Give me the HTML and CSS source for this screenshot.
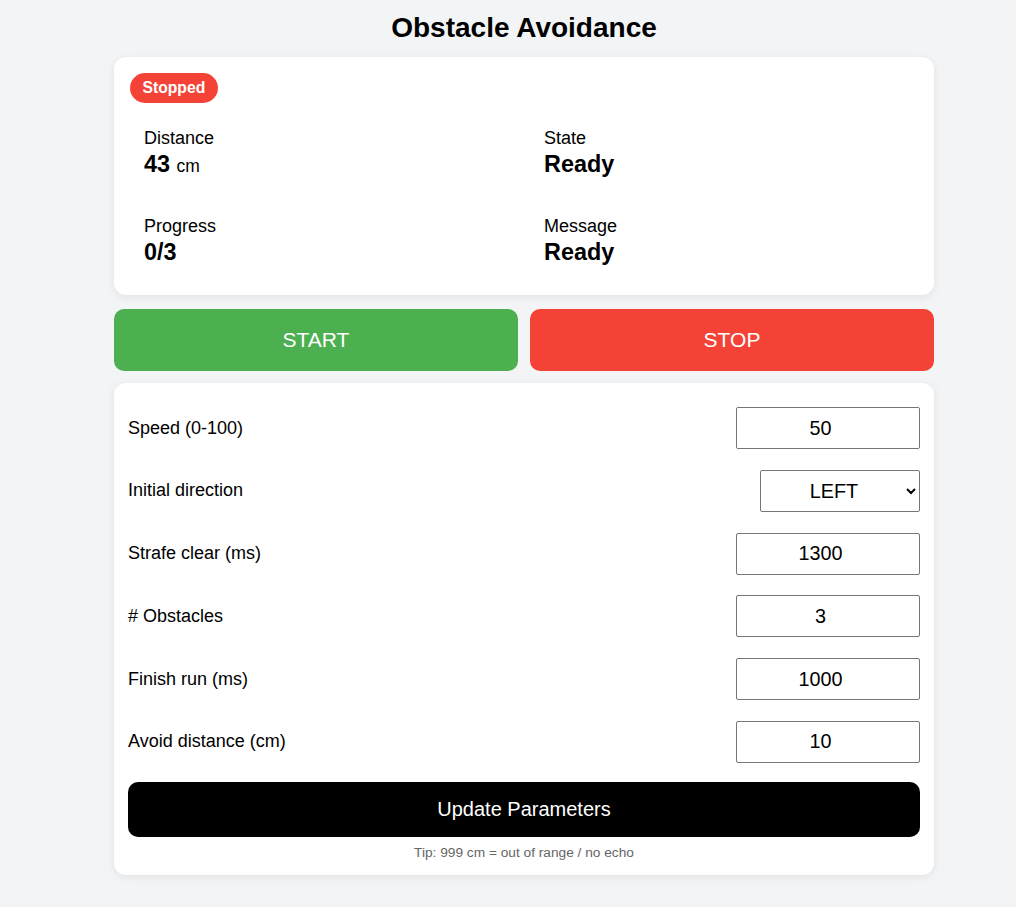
FILE: index.html
```html
<!DOCTYPE html>
<html lang="en">
<head>
<meta charset="utf-8">
<title>Obstacle Avoidance</title>
<link rel="stylesheet" href="styles.css">
</head>
<body>
<div class="page">
  <h1 class="title">Obstacle Avoidance</h1>

  <section class="card status">
    <span class="badge">Stopped</span>
    <div class="stats">
      <div class="stat">
        <div class="stat-label">Distance</div>
        <div class="stat-value">43 <span class="unit">cm</span></div>
      </div>
      <div class="stat">
        <div class="stat-label">State</div>
        <div class="stat-value">Ready</div>
      </div>
      <div class="stat">
        <div class="stat-label">Progress</div>
        <div class="stat-value">0/3</div>
      </div>
      <div class="stat">
        <div class="stat-label">Message</div>
        <div class="stat-value">Ready</div>
      </div>
    </div>
  </section>

  <div class="controls">
    <button class="btn btn-start">START</button>
    <button class="btn btn-stop">STOP</button>
  </div>

  <section class="card params">
    <div class="rows">
      <div class="row">
        <label class="row-label">Speed (0-100)</label>
        <input class="field" type="number" value="50">
      </div>
      <div class="row">
        <label class="row-label">Initial direction</label>
        <select class="field select">
          <option>LEFT</option>
          <option>RIGHT</option>
        </select>
      </div>
      <div class="row">
        <label class="row-label">Strafe clear (ms)</label>
        <input class="field" type="number" value="1300">
      </div>
      <div class="row">
        <label class="row-label"># Obstacles</label>
        <input class="field" type="number" value="3">
      </div>
      <div class="row">
        <label class="row-label">Finish run (ms)</label>
        <input class="field" type="number" value="1000">
      </div>
      <div class="row">
        <label class="row-label">Avoid distance (cm)</label>
        <input class="field" type="number" value="10">
      </div>
    </div>
    <button class="btn-update">Update Parameters</button>
    <p class="tip">Tip: 999 cm = out of range / no echo</p>
  </section>
</div>
</body>
</html>
```

FILE: styles.css
```css
* {
  box-sizing: border-box;
}

html, body {
  margin: 0;
  padding: 0;
  background: #f3f4f6;
  font-family: "Liberation Sans", Arial, sans-serif;
  color: #000;
}

body {
  padding-left: 32px;
}

.page {
  max-width: 820px;
  margin: 0 auto;
  padding-bottom: 32px;
}

.title {
  margin: 0;
  padding-top: 12px;
  height: 57px;
  text-align: center;
  font-size: 28px;
  line-height: 32px;
  font-weight: 700;
}

.card {
  background: #fff;
  border-radius: 12px;
  box-shadow: 0 2px 8px rgba(0, 0, 0, 0.08);
}

.status {
  padding: 16px 16px 15px;
}

.badge {
  display: inline-block;
  height: 30px;
  line-height: 30px;
  padding: 0 12.5px;
  border-radius: 15px;
  background: #f44336;
  color: #fff;
  font-weight: 700;
  font-size: 15.7px;
}

.stats {
  display: grid;
  grid-template-columns: 1fr 1fr;
  column-gap: 12px;
  row-gap: 8px;
  margin-top: 11px;
}

.stat {
  padding: 14px;
}

.stat-label {
  font-size: 18px;
  line-height: 21px;
}

.stat-value {
  margin-top: 2px;
  font-size: 23.4px;
  line-height: 27px;
  font-weight: 700;
}

.unit {
  font-size: 17.5px;
  font-weight: 400;
}

.controls {
  display: grid;
  grid-template-columns: 1fr 1fr;
  gap: 12px;
  margin: 14px 0 12px;
}

.btn {
  height: 62px;
  border: none;
  border-radius: 10px;
  color: #fff;
  font-family: "Liberation Sans", Arial, sans-serif;
  font-size: 21px;
}

.btn-start {
  background: #4caf50;
}

.btn-stop {
  background: #f44336;
}

.params {
  padding: 24px 14px 14px;
}

.rows {
  display: flex;
  flex-direction: column;
  gap: 20.8px;
}

.row {
  display: flex;
  align-items: center;
  justify-content: space-between;
}

.row-label {
  font-size: 18px;
}

.field {
  width: 184px;
  height: 42px;
  border: 1px solid #767676;
  border-radius: 2px;
  background: #fff;
  font-family: "Liberation Sans", Arial, sans-serif;
  font-size: 19.8px;
  text-align: center;
  color: #000;
  padding: 0 4px;
}

.select {
  width: 160px;
  text-align-last: center;
}

.btn-update {
  display: block;
  width: 100%;
  height: 55px;
  margin-top: 19px;
  border: none;
  border-radius: 10px;
  background: #000;
  color: #fff;
  font-family: "Liberation Sans", Arial, sans-serif;
  font-size: 20px;
}

.tip {
  margin: 8px 0 0;
  text-align: center;
  font-size: 13.7px;
  line-height: 16px;
  color: #666;
}
```
